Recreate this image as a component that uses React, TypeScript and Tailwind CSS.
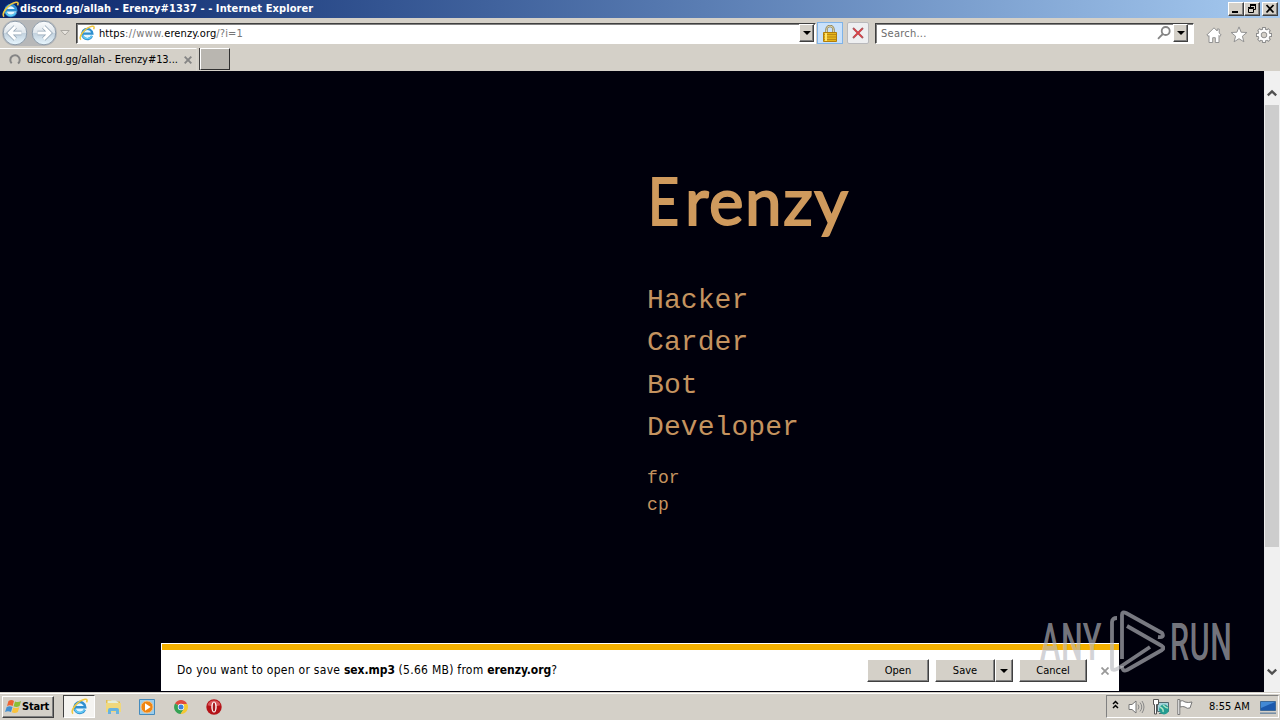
import type { ReactNode } from 'react';
import clsx from 'clsx';

const RAISED =
  'border border-t-white border-l-white border-r-[#404040] border-b-[#404040] bg-[#d4d0c8] shadow-[inset_-1px_-1px_0_#808080]';
const UI = "font-['DejaVu_Sans_Condensed','DejaVu_Sans',sans-serif]";

function IeLogo({ size }: { size: number }) {
  return (
    <svg width={size} height={size} viewBox="0 0 16 16" fill="none" className="shrink-0">
      <circle cx="8.3" cy="8.6" r="5.6" fill="#e6f7ff" />
      <path d="M13 11A5.1 5.1 0 1 1 13.4 8.7H4.2" stroke="#2f8fd0" strokeWidth="2.3" />
      <path d="M12.8 10.8A4.9 4.9 0 0 1 3.7 10.3" stroke="#63cbf5" strokeWidth="1.3" />
      <path d="M1.8 14.8C-1 11 7 2.2 13.2 1.2c2.2-.3 2.2 1.3 1.4 3" stroke="#f1c840" strokeWidth="1.5" />
    </svg>
  );
}

function DownArrow() {
  return (
    <svg width="8" height="4" viewBox="0 0 8 4">
      <path d="M0 0h8L4 4z" fill="#000" />
    </svg>
  );
}

function NavArrow({ flip = false }: { flip?: boolean }) {
  return (
    <svg width="26" height="26" viewBox="0 0 26 26" className={clsx('shrink-0', flip && '-scale-x-100')}>
      <defs>
        <linearGradient id="nav" x1="0" y1="0" x2="0" y2="1">
          <stop offset="0" stopColor="#fbfcfd" />
          <stop offset=".48" stopColor="#dfe6ec" />
          <stop offset=".52" stopColor="#c3d2de" />
          <stop offset="1" stopColor="#e8f7ff" />
        </linearGradient>
      </defs>
      <circle cx="13" cy="13" r="11.8" fill="url(#nav)" stroke="#8f9dab" />
      <path d="M13.3 6.9 7.2 13l6.1 6.1M8 13h11.5" fill="none" stroke="#93a5b5" strokeWidth="4.4" />
      <path d="M13.3 6.9 7.2 13l6.1 6.1M8 13h11.5" fill="none" stroke="#fff" strokeWidth="2.9" />
    </svg>
  );
}

function TitleButton({ children }: { children: ReactNode }) {
  return (
    <div className={clsx('h-[14px] w-4', RAISED)}>
      <svg width="14" height="12" viewBox="0 0 14 12" fill="none" stroke="#000">
        {children}
      </svg>
    </div>
  );
}

function TitleBar() {
  return (
    <header className="flex h-[18px] items-center bg-linear-to-r from-[#0a246a] to-[#a6caf0] pr-[2px] pl-[2px]">
      <IeLogo size={17} />
      <span className="ml-px grow text-[11px] font-bold tracking-[0.09px] whitespace-pre text-white">
        discord.gg/allah - Erenzy#1337 - - Internet Explorer
      </span>
      <TitleButton>
        <path d="M3 9h6" strokeWidth="2" />
      </TitleButton>
      <TitleButton>
        <path d="M5.5 6V2.5h5v4H9M5 2.5h6M5 1.5h6" />
        <path d="M3.5 5.5h5v4h-5zM3 4.5h6" />
      </TitleButton>
      <div className="w-[2px]" />
      <TitleButton>
        <path d="m3.5 2 7 7.5M10.5 2l-7 7.5" strokeWidth="1.8" />
      </TitleButton>
    </header>
  );
}

function DropButton() {
  return (
    <div className={clsx('flex h-[18px] w-[15px] shrink-0 items-center justify-center', RAISED)}>
      <DownArrow />
    </div>
  );
}

function AddressRow() {
  return (
    <div className="flex h-[30px] items-center pl-[2px] text-[11px]">
      <div className="flex w-[55px] justify-between rounded-full bg-[#b7b8b9]">
        <NavArrow />
        <NavArrow flip />
      </div>
      <svg width="10" height="6" viewBox="0 0 10 6" className="ml-[3px]">
        <path d="M.8.5h8.4L5 5z" fill="#e8e5df" stroke="#aaa7a1" />
      </svg>
      <div className="ml-[6px] flex h-[21px] w-[740px] items-center border border-t-[#404040] border-r-white border-b-white border-l-[#404040] bg-white shadow-[inset_1px_1px_0_#808080] pr-px pl-[2px]">
        <IeLogo size={16} />
        <span className="ml-1 grow pt-[2px] tracking-[0.1px] text-[#777]">
          <span className="text-black">https</span>
          <span className="tracking-[0.4px]">://www.</span>
          <span className="text-black">erenzy.org</span>/?i=1
        </span>
        <DropButton />
      </div>
      <div className="ml-px flex h-[22px] w-[26px] items-center justify-center border border-[#7fb3e8] bg-[#c9e1fb]">
        <svg width="14" height="17" viewBox="0 0 14 17">
          <path d="M3.5 8V4.5a3.5 3.5 0 0 1 7 0V8" fill="none" stroke="#8f8154" strokeWidth="2.4" />
          <path d="M3.5 8V4.5a3.5 3.5 0 0 1 7 0V8" fill="none" stroke="#dcd5ac" strokeWidth="1" />
          <path d="M.5 7.5h13v9H.5z" fill="#e5b51b" stroke="#b17d0b" />
          <path d="M1 9.5h12M1 12h12M1 14.5h12" stroke="#bd8914" />
          <path d="M3 8v8" stroke="#ffe36c" strokeWidth="2" />
        </svg>
      </div>
      <div className="ml-1 flex h-[22px] w-[22px] items-center justify-center rounded-[2px] border border-[#b9b9bc] bg-[#eeeff1]">
        <svg width="12" height="12" viewBox="0 0 12 12">
          <path d="m1 1 10 10M11 1 1 11" stroke="#a85b60" strokeWidth="2" />
          <path d="m2 2 8 8M10 2 2 10" stroke="#de4147" strokeWidth="1.2" />
        </svg>
      </div>
      <div className="ml-[6px] flex h-[21px] w-[319px] items-center border border-t-[#404040] border-r-white border-b-white border-l-[#404040] bg-white shadow-[inset_1px_1px_0_#808080] pr-[5px] pl-[5px]">
        <span className="grow pt-[2px] tracking-[0.25px] text-[#6d6d6d]">Search...</span>
        <svg width="14" height="14" viewBox="0 0 14 14" fill="none" stroke="#858585" strokeWidth="1.8" className="mr-[2px]">
          <circle cx="8.7" cy="5" r="4" />
          <path d="M5.8 8 1 12.8" />
        </svg>
        <DropButton />
      </div>
      <div className="flex grow items-center justify-between pt-[3px] pr-[8px] pl-[12px]">
        <svg width="16" height="16" viewBox="0 0 16 16" fill="#fff" stroke="#929292">
          <path d="M8 .8.8 8l1.4 1.3.8-.8v7h3.7v-4.8h2.6v4.8H13v-7l.8.8L15.2 8l-2-2V2h-2v2z" />
        </svg>
        <svg width="18" height="17" viewBox="0 0 18 17" fill="#fff" stroke="#929292">
          <path d="m9 .9 2.1 5.3 5.8.3-4.5 3.7 1.5 5.6L9 12.7l-4.9 3.1 1.5-5.6L1.1 6.5l5.8-.3z" />
        </svg>
        <svg width="16" height="16" viewBox="0 0 17 17" fill="none">
          <path d="M8.5 0v17M0 8.5h17M2.5 2.5l12 12M14.5 2.5l-12 12" stroke="#8c8c8c" strokeWidth="4" />
          <circle cx="8.5" cy="8.5" r="4.7" stroke="#8c8c8c" strokeWidth="4.2" />
          <path d="M8.5 1v15M1 8.5h15M3.2 3.2l10.6 10.6M13.8 3.2 3.2 13.8" stroke="#fff" strokeWidth="2" />
          <circle cx="8.5" cy="8.5" r="4.7" stroke="#fff" strokeWidth="2.4" />
          <circle cx="8.5" cy="8.5" r="3" fill="#d4d0c8" stroke="#8c8c8c" />
        </svg>
      </div>
    </div>
  );
}

function TabRow() {
  return (
    <div className="flex h-[23px] text-[11px]">
      <div className="flex w-[197px] items-center border-t border-r border-t-white border-r-[#d9d6cf] pl-[9px]">
        <svg width="12" height="12" viewBox="0 0 12 12" fill="none" stroke="#858585" strokeWidth="2">
          <path d="M2.7 9.3A4.7 4.7 0 1 1 9 9.6" />
        </svg>
        <span className="ml-[6px] w-[157px] pt-px tracking-[-0.05px] whitespace-nowrap">
          discord.gg/allah - Erenzy#13...
        </span>
        <svg width="8" height="8" viewBox="0 0 8 8" stroke="#858585" strokeWidth="1.9">
          <path d="m.7.7 6.6 6.6M7.3.7.7 7.3" />
        </svg>
      </div>
      <div className="ml-[3px] h-[22px] w-[30px] border border-t-white border-r-[#303030] border-b-[#303030] border-l-white bg-[#b9b6b0] shadow-[-1px_0_0_#404040]" />
    </div>
  );
}

function ActionButton({ label, className }: { label: string; className: string }) {
  return (
    <button className={clsx('h-[23px] pt-[2px] text-[11px]', RAISED, className)}>{label}</button>
  );
}

function DownloadBar() {
  return (
    <div className="absolute bottom-px left-[161px] h-12 w-[958px] border-t border-white bg-white">
      <div className="ml-px h-[6px] bg-[#f4b000]" />
      <div className="flex h-[41px] items-center pl-4 text-[12px]">
        <p className="grow pb-[2px] tracking-[0.27px] whitespace-nowrap">
          Do you want to open or save <b className="tracking-[-0.05px]">sex.mp3</b> (5.66 MB) from{' '}
          <b className="tracking-[-0.05px]">erenzy.org</b>?
        </p>
        <ActionButton label="Open" className="w-[62px]" />
        <ActionButton label="Save" className="ml-[6px] w-[60px]" />
        <div className={clsx('flex h-[23px] w-[18px] items-center justify-center', RAISED)}>
          <DownArrow />
        </div>
        <ActionButton label="Cancel" className="ml-[6px] w-[68px]" />
        <svg width="8" height="8" viewBox="0 0 8 8" stroke="#999" strokeWidth="1.8" className="mr-[10px] ml-[14px]">
          <path d="m.5.5 7 7M7.5.5l-7 7" />
        </svg>
      </div>
    </div>
  );
}

function Watermark() {
  return (
    <div className="absolute top-[538px] left-[1040px] flex h-[66px] w-[192px] items-center font-['Roboto','Liberation_Sans',sans-serif] text-[51px] leading-none font-medium text-[#b9bac0]/65">
      <span className="w-[69px]">
        <span className="inline-block origin-left scale-x-[0.6] tracking-[1px]">ANY</span>
      </span>
      <svg
        width="56"
        height="64"
        viewBox="0 0 56 64"
        fill="none"
        stroke="#b9bac0"
        strokeOpacity=".65"
        strokeWidth="3.8"
        strokeLinejoin="round"
      >
        <path d="M8 8q-5 0-5 4v46q0 3 5 1l33-22" />
        <path d="M49 27q7 1 4-4L17 3q-4-2-4 2v44" />
        <path d="m18 16 35 20q3 2 0 4L18 60q-5 2-5-4" />
      </svg>
      <span className="ml-[5px] w-[61px]">
        <span className="inline-block origin-left scale-x-[0.595] tracking-[1px]">RUN</span>
      </span>
    </div>
  );
}

function Chevron({ down = false }: { down?: boolean }) {
  return (
    <svg width="10" height="8" viewBox="0 0 10 8" className={clsx(down && 'rotate-180')}>
      <path d="m.8 6.4 4.2-4 4.2 4" fill="none" stroke="#505050" strokeWidth="2.3" />
    </svg>
  );
}

function Page() {
  return (
    <main className="relative flex h-[621px] bg-[#00000c]">
      <section className="grow pt-[84px] pl-[647px] text-[#cf9a5d]">
        <h1 className="h-[125px] pl-px font-['Lato','Open_Sans',sans-serif] text-[65.5px] leading-[89px] tracking-[1.5px] [-webkit-text-stroke:1.8px_#cf9a5d]">
          <span className="inline-block w-[37px] origin-left scale-x-82">E</span>renzy
        </h1>
        <div className="font-['Liberation_Mono','Courier_New',monospace] text-[28px] leading-[42.25px] tracking-[0.08px] text-[#c4935f]">
          <p>Hacker</p>
          <p>Carder</p>
          <p>Bot</p>
          <p>Developer</p>
          <div className="mt-4 text-[18px] leading-[27px]">
            <p>for</p>
            <p>cp</p>
          </div>
        </div>
      </section>
      <aside className="flex w-4 flex-col items-center bg-[#f0f0f0]">
        <div className="flex h-[34px] items-center pt-[10px]">
          <Chevron />
        </div>
        <div className="h-[442px] w-[14px] bg-[#cdcdcd]" />
        <div className="mt-auto mb-4">
          <Chevron down />
        </div>
      </aside>
      <DownloadBar />
      <Watermark />
    </main>
  );
}

function WindowsFlag() {
  return (
    <svg width="17" height="16" viewBox="0 0 17 16">
      <path d="M3.5 2Q6.5 0 9 2L7.7 7Q5 5.5 2 7z" fill="#ed6332" />
      <path d="M10 2.4q3 1.4 6-.3L14.6 7q-3 1.7-6 .3z" fill="#8bbe36" />
      <path d="M1.7 8q3-1.5 5.8 0L6 13q-3-1.5-6 0z" fill="#428fd1" />
      <path d="M8.3 8.4q3 1.3 6-.2L12.8 13q-3 1.7-6 .3z" fill="#f9c23c" />
    </svg>
  );
}

function QuickLaunch() {
  return (
    <>
      <svg width="17" height="17" viewBox="0 0 17 17" className="ml-[10px]">
        <path d="M1 2h5l1 1.5h8V12H1z" fill="#e3bd50" />
        <path d="M2.5 2.5h8l3 2v5h-11z" fill="#e5eedb" />
        <path d="M1 5h15v9H1z" fill="#f0d87c" />
        <path d="M3 16v-4q0-2 2-2h7q2 0 2 2v4h-3v-3H6v3z" fill="#68b3df" />
      </svg>
      <svg width="16" height="16" viewBox="0 0 16 16" className="ml-[17px]">
        <path d="M.5.5h15v15H.5z" fill="#9bcdec" stroke="#458bbd" />
        <circle cx="8" cy="8" r="6" fill="#ef8512" stroke="#f9c080" />
        <path d="m6 4.2 5.7 3.8L6 11.8z" fill="#fff" />
      </svg>
      <svg width="14" height="14" viewBox="0 0 14 14" className="ml-[19px]">
        <path d="M7 7 1 3.5A7 7 0 0 1 13 3.5z" fill="#df493d" />
        <path d="M7 7 1 3.5A7 7 0 0 0 6.6 14L10 8.7z" fill="#36a254" />
        <path d="M7 4h6.3A7 7 0 0 1 6.6 14L10 8.7z" fill="#f4c832" />
        <circle cx="7" cy="7" r="3.2" fill="#fff" />
        <circle cx="7" cy="7" r="2.5" fill="#3b80dc" />
      </svg>
      <svg width="16" height="16" viewBox="0 0 16 16" className="ml-[18px]">
        <circle cx="8" cy="8" r="7.7" fill="#b41318" />
        <path d="M1.5 6.2a6.8 6.8 0 0 1 13 0Q8 8 1.5 6.2z" fill="#d9575b" />
        <ellipse cx="8" cy="8" rx="2.7" ry="5.6" fill="#fff" />
        <ellipse cx="8" cy="8" rx="1.3" ry="4.5" fill="#a81b20" />
      </svg>
    </>
  );
}

function Tray() {
  return (
    <div className="mr-[1px] ml-auto flex h-[23px] w-[173px] items-center border border-t-[#808080] border-r-white border-b-white border-l-[#808080] pl-[5px]">
      <svg width="7" height="9" viewBox="0 0 7 9" fill="none" stroke="#000" strokeWidth="1.5" className="mb-1 shrink-0">
        <path d="M1 4 3.5 1.5 6 4M1 8l2.5-2.5L6 8" />
      </svg>
      <svg width="17" height="16" viewBox="0 0 17 16" fill="none" className="ml-[9px] shrink-0">
        <path d="M1 5.5h3L8 2v12l-4-3.5H1z" fill="#fff" stroke="#777" />
        <path d="M10 5.5q2 2.5 0 5M12 3.5q3.5 4.5 0 9M14 2q4 6 0 12" stroke="#888" />
      </svg>
      <svg width="17" height="16" viewBox="0 0 17 16" className="ml-[8px] shrink-0">
        <path d="M4.5 3.5h11v9h-11z" fill="#a6d4dc" stroke="#526970" />
        <path d="M6 14.5h7" stroke="#526970" />
        <path d="M.5.5h5v5h-2V15h-2V5.5h-1z" fill="#fff" stroke="#555" />
        <circle cx="11" cy="10.5" r="4.9" fill="#239c91" />
        <path d="M7 8q4 2 3 5M10 6q3 3 5 3" stroke="#a9e2c3" strokeWidth="1.5" fill="none" />
      </svg>
      <svg width="17" height="16" viewBox="0 0 17 16" className="ml-[7px] shrink-0">
        <path d="M3 2q3-1 5 1 3 1 7 0l-2 6q-3 1-5-1-2-1-5 0z" fill="#fff" stroke="#777" />
        <path d="M.8.5h2v15h-2z" fill="#fff" stroke="#777" />
      </svg>
      <span className="ml-[15px] w-[51px] pt-[2px] text-[11px] whitespace-nowrap">8:55 AM</span>
      <svg width="16" height="14" viewBox="0 0 16 14" className="shrink-0">
        <path d="M.5 1.5h15v9H.5z" fill="#1c59ad" stroke="#3e6997" />
        <path d="M1 2h14L1 8z" fill="#4389d5" />
        <path d="M0 13.2h16" stroke="#718ba4" strokeWidth="1.5" />
      </svg>
    </div>
  );
}

function Taskbar() {
  return (
    <footer className="flex h-7 items-center border-t border-[#d4d0c8] bg-[#d4d0c8] pl-[2px] shadow-[inset_0_1px_0_#fff]">
      <div className={clsx('flex h-[22px] w-[52px] items-center pl-[2px]', RAISED)}>
        <WindowsFlag />
        <span className="pt-[2px] text-[11px] font-bold tracking-[-0.2px]">Start</span>
      </div>
      <div className="ml-[9px] flex h-[23px] w-8 items-center justify-center border border-t-[#404040] border-r-white border-b-white border-l-[#404040] bg-[#f5f4f1]">
        <IeLogo size={17} />
      </div>
      <QuickLaunch />
      <Tray />
    </footer>
  );
}

export default function App() {
  return (
    <div className={clsx('h-[720px] w-[1280px] overflow-hidden bg-[#d4d0c8] text-black', UI)}>
      <TitleBar />
      <AddressRow />
      <TabRow />
      <Page />
      <Taskbar />
    </div>
  );
}
